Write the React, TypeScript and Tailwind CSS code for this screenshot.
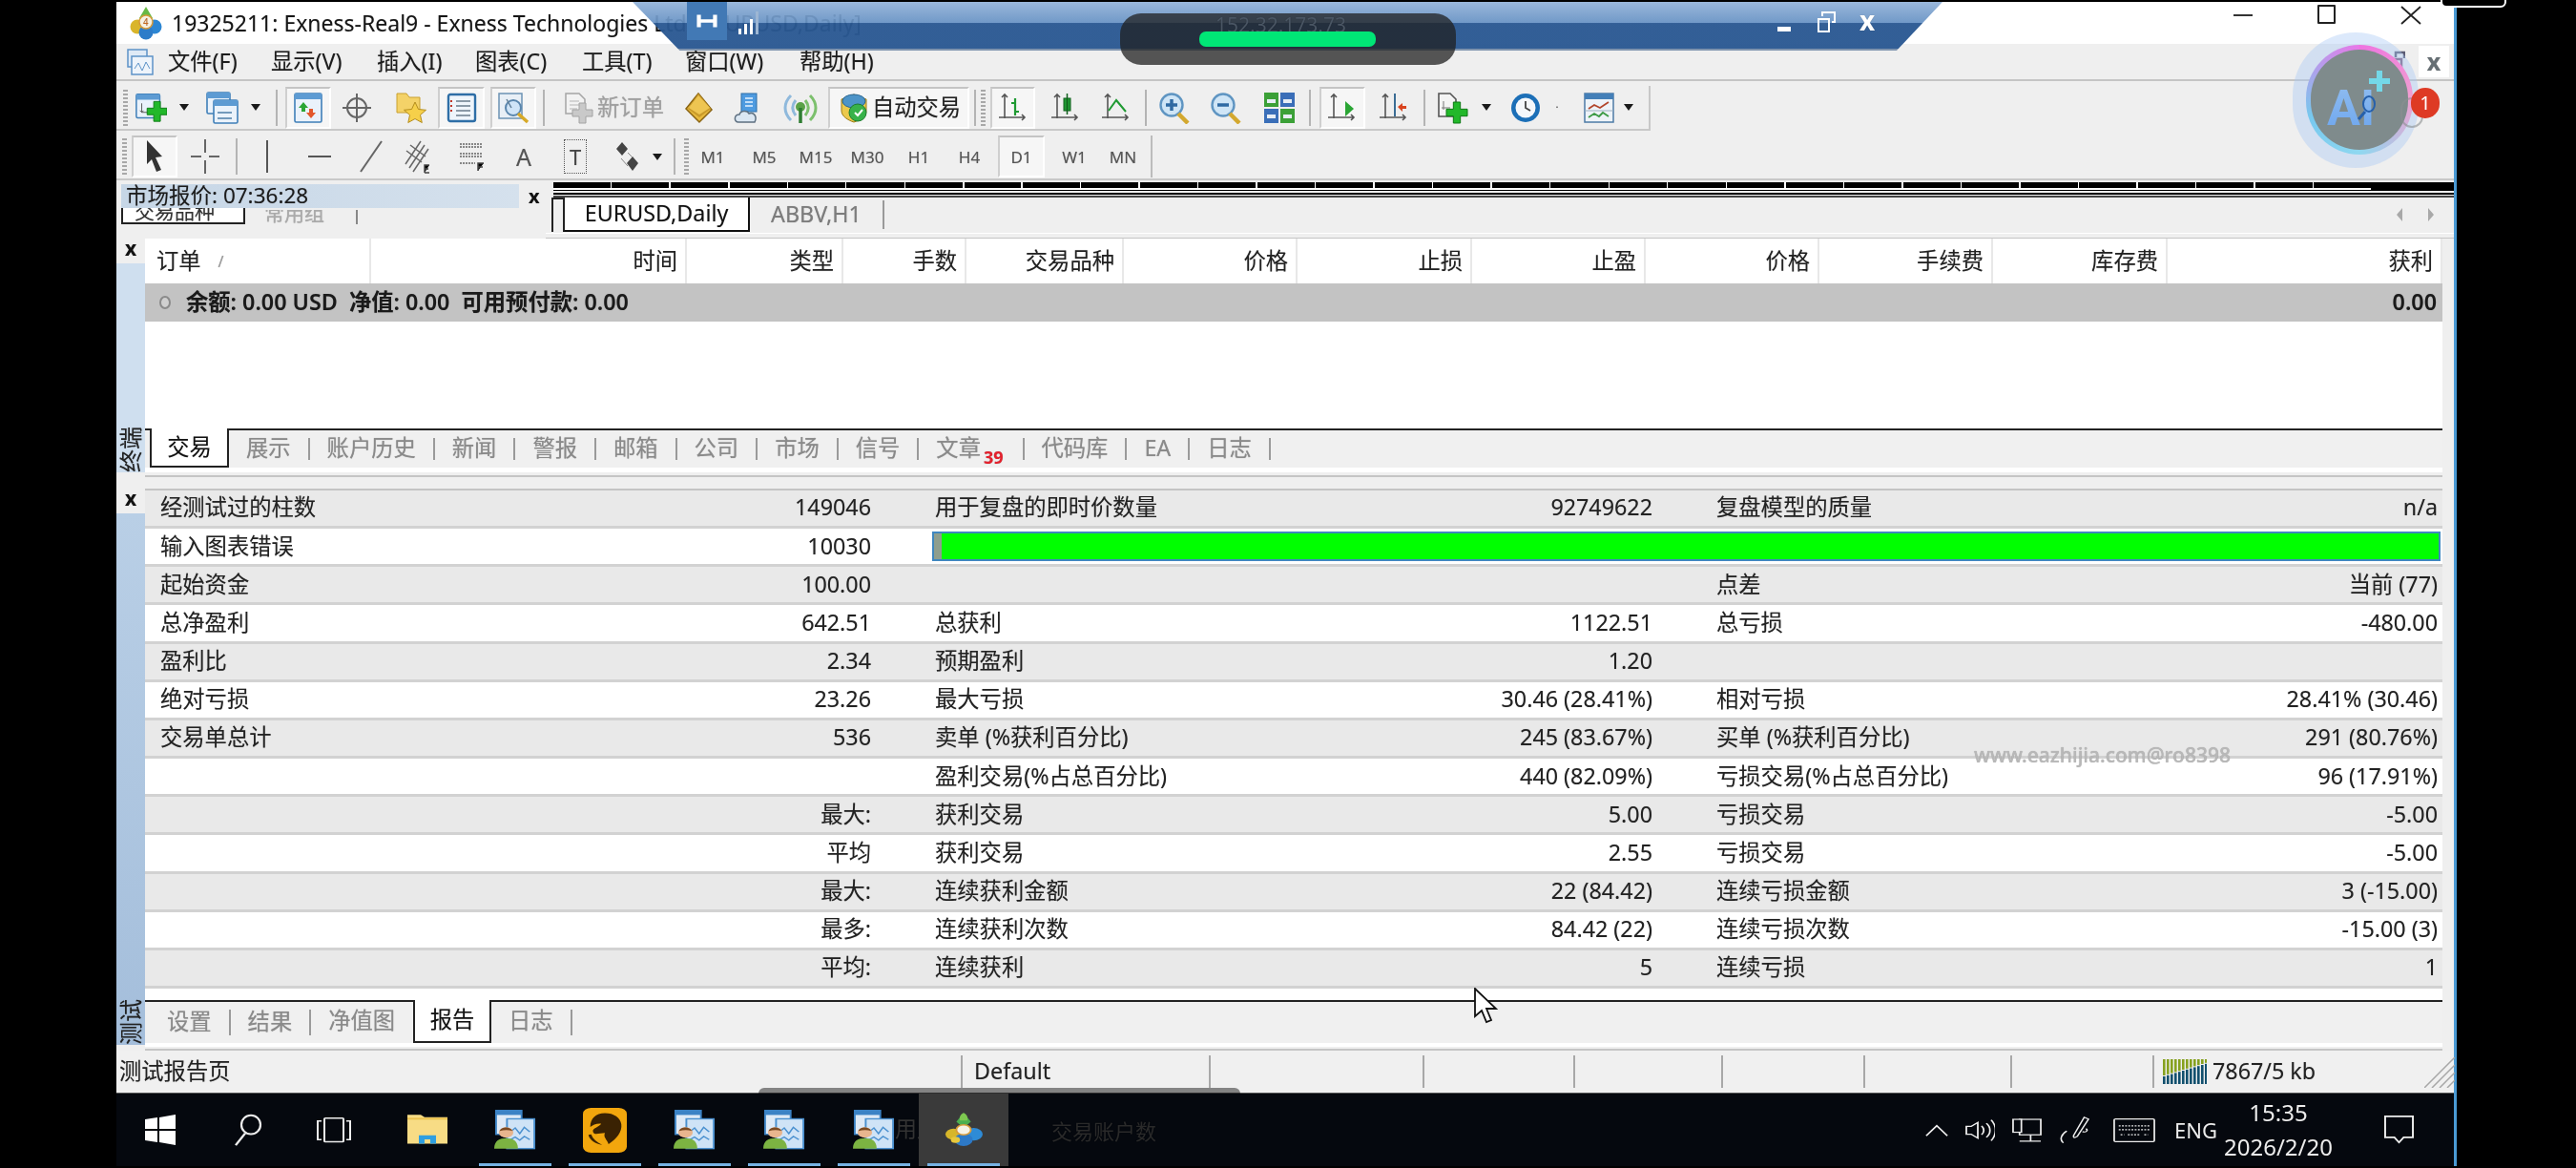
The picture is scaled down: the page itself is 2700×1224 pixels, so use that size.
import React from "react";

type P = { children?: React.ReactNode; c?: string };
const Slot = ({ children, c = "" }: P) => <div className={`flex h-full shrink-0 items-center justify-center ${c}`}>{children}</div>;
const Act = ({ children, c = "" }: P) => (
  <div className={`flex h-[44px] shrink-0 items-center justify-center border-b-2 border-l-2 border-r-2 border-t-2 border-b-white border-l-[#cfcfcf] border-r-white border-t-[#c4c4c4] bg-[#f6f6f6] ${c}`}>{children}</div>
);
const Sep = () => <div className="h-[38px] w-[2px] bg-[#b4b4b4]" />;
const Grip = () => <div className="h-[38px] w-[5px] bg-[repeating-linear-gradient(to_bottom,#a8a8a8_0,#a8a8a8_2px,transparent_2px,transparent_4px)]" />;
const Caret = () => <svg width="10" height="7" viewBox="0 0 10 7"><path d="M0 0h10L5 7z" fill="#1a1a1a" /></svg>;

const Ic = ({ children, w = 36, h = 34 }: { children: React.ReactNode; w?: number; h?: number }) => (
  <svg width={w} height={h} viewBox={`0 0 ${w} ${h}`} fill="none">{children}</svg>
);
const Plus = ({ x, y, s = 20, f = "#22b82a", st = "#0d7a14" }: { x: number; y: number; s?: number; f?: string; st?: string }) => {
  const t = s / 3;
  return <path d={`M${x + t} ${y}h${t}v${t}h${t}v${t}h${-t}v${t}h${-t}v${-t}h${-t}v${-t}h${t}z`} fill={f} stroke={st} strokeWidth="1" />;
};
const Win = ({ x = 2, y = 2, w = 26, h = 26 }: { x?: number; y?: number; w?: number; h?: number }) => (
  <g><rect x={x} y={y} width={w} height={h} rx="1.5" fill="#eaf2fb" stroke="#3f7fb8" strokeWidth="1.6" /><rect x={x} y={y} width={w} height="6" fill="#5d9bd3" /></g>
);
const Axis = () => <path d="M9 3v25M4 27h26M6 6l3-3 3 3M27 24l3 3-3 3M4 27h-1" stroke="#555" strokeWidth="1.6" />;

const INew = () => <Ic><Win /><path d="M8 12v10M6 20l2 2 2-2M8 22h10" stroke="#555" /><Plus x={14} y={10} s={22} /></Ic>;
const IProfile = () => <Ic><Win x={2} y={1} w={24} h={22} /><Win x={9} y={9} w={25} h={24} /><path d="M13 22h15M13 28h15" stroke="#4c7ea8" strokeWidth="1.4" /></Ic>;
const IMW = () => <Ic><Win x={4} y={2} w={28} h={30} /><path d="M13 11l5 6h-3v4h-4v-4H8z" fill="#2aa534" /><path d="M21 28l-5-6h3v-4h4v4h3z" fill="#e2572c" /></Ic>;
const ICross = () => <Ic><circle cx="18" cy="17" r="10" stroke="#666" strokeWidth="2" /><path d="M18 2v30M3 17h30" stroke="#666" strokeWidth="2" /></Ic>;
const IFolder = () => <Ic><path d="M4 2h10l3 4h11v16H4z" fill="#f4d268" stroke="#c9a02f" /><path d="M23 11l3.5 7.5 8 .8-6 5.2 1.8 8-7.300-4-7.200 4 1.700-8-6-5.200 8-.8z" fill="#f6d04a" stroke="#b58d1d" /></Ic>;
const INav = () => <Ic><rect x="4" y="3" width="28" height="28" rx="2" fill="#eff5fb" stroke="#2e6ea6" strokeWidth="2.4" /><path d="M12 10h15M12 15h15M12 20h15M12 25h15" stroke="#6b7c8c" strokeWidth="1.500" /><path d="M7 9v2M7 14v2M7 19v2" stroke="#c0392b" strokeWidth="2" /></Ic>;
const ITester = () => <Ic><rect x="3" y="2" width="24" height="26" fill="#e8eff6" stroke="#6c93b4" strokeWidth="1.500" /><circle cx="18" cy="17" r="8" fill="#cfe4f7" stroke="#5a86ad" strokeWidth="2" /><path d="M23 23l10 9" stroke="#d7a928" strokeWidth="3.500" /><path d="M11 8l5 9" stroke="#627f98" strokeWidth="1.500" /></Ic>;
const IDoc = () => <Ic><path d="M5 2h14l6 6v15H5z" fill="#f2f2f2" stroke="#a5a5a5" strokeWidth="1.500" /><path d="M9 10h10M9 14h10M9 18h8" stroke="#b5b5b5" /><Plus x={12} y={12} s={21} f="#c9c9c9" st="#a3a3a3" /></Ic>;
const IDiamond = () => <Ic><path d="M17 2l14 17-13 13L4 18z" fill="#e7b93d" stroke="#8a6413" strokeWidth="1.500" /><path d="M17 2L6 18l12 9 12-9" fill="#c99a2a" /><path d="M17 4L7 17l11 7 11-7z" fill="#eec552" /></Ic>;
const ICloud = () => <Ic><rect x="10" y="2" width="16" height="19" fill="#4f9be0" stroke="#2c6ea8" /><path d="M14 7h8M14 11h8M14 15h8" stroke="#e8f4ff" strokeWidth="1.500" /><path d="M7 32c-5 0-5-8 1-8 1-4 8-5 10-1 5-2 9 3 6 9z" fill="#dbe7f2" stroke="#5d6f80" strokeWidth="1.500" /></Ic>;
const ISignal = () => <Ic><path d="M8 4c-8 8-8 18 0 26" stroke="#8fb9dc" strokeWidth="3" /><path d="M13 9c-4 5-4 11 0 16" stroke="#8fb9dc" strokeWidth="3" /><path d="M28 4c8 8 8 18 0 26" stroke="#7cc06d" strokeWidth="3" /><path d="M23 9c4 5 4 11 0 16" stroke="#7cc06d" strokeWidth="3" /><circle cx="18" cy="16" r="5" fill="#5aa248" /><path d="M18 17v16" stroke="#2e7d32" strokeWidth="3.500" /></Ic>;
const IAuto = () => <Ic><path d="M5 8l13-5 13 5v12c0 6-7 10-13 12-6-2-13-6-13-12z" fill="#ecc94c" stroke="#9b7b16" /><ellipse cx="18" cy="10" rx="12" ry="7" fill="#4d94c8" stroke="#2a6591" /><circle cx="22" cy="22" r="9" fill="#38b24a" stroke="#1d7d2e" /><path d="M19 22l3 3 5-6" stroke="#fff" strokeWidth="2" /></Ic>;
const IBars = () => <Ic><Axis /><path d="M20 7v18M16 12h4M20 21h4" stroke="#1f9a32" strokeWidth="2.200" /></Ic>;
const ICandle = () => <Ic><Axis /><rect x="16" y="7" width="7" height="13" fill="#1f9a32" stroke="#105f1c" /><path d="M19.500 2v22" stroke="#105f1c" strokeWidth="1.500" /></Ic>;
const ILine = () => <Ic><Axis /><path d="M10 20l8-11 10 12" stroke="#1f9a32" strokeWidth="2" /></Ic>;
const IZoom = ({ minus }: { minus?: boolean }) => (
  <Ic><circle cx="14" cy="14" r="11.500" fill="#cfe5f6" stroke="#5f95c2" strokeWidth="2.400" /><path d="M21 23l10 10" stroke="#d3a82f" strokeWidth="4.500" /><path d="M8 14h12" stroke="#2f6aa3" strokeWidth="3.500" />{!minus && <path d="M14 8v12" stroke="#2f6aa3" strokeWidth="3.500" />}</Ic>
);
const ITile = () => <Ic><rect x="2" y="1" width="15" height="15" fill="#3ba037" /><rect x="19" y="1" width="15" height="15" fill="#3a6eb8" /><rect x="2" y="18" width="15" height="15" fill="#3a6eb8" /><rect x="19" y="18" width="15" height="15" fill="#3ba037" /><path d="M5 8h9v4H5zM22 8h9v4h-9zM5 24h9v4H5zM22 24h9v4h-9z" fill="#e6edf5" /></Ic>;
const IShift = () => <Ic><Axis /><path d="M21 10l9 8-9 8z" fill="#2aa534" /></Ic>;
const IScroll = () => <Ic><Axis /><path d="M19 2v24" stroke="#3b6c94" strokeWidth="2" /><path d="M22 16l5-4v3h4v3h-4v3z" fill="#d9441f" /></Ic>;
const IDocG = () => <Ic><path d="M4 2h12l6 6v18H4z" fill="#f4f4f4" stroke="#555" strokeWidth="1.600" /><path d="M9 10v9M7 17h9" stroke="#777" /><Plus x={12} y={11} s={22} /></Ic>;
const IClock = () => <Ic><circle cx="18" cy="17" r="15" fill="#1c6fb7" /><circle cx="18" cy="17" r="10.500" fill="#f5f8fb" /><path d="M18 10v7l5 3" stroke="#444" strokeWidth="1.800" /></Ic>;
const IInd = () => <Ic><rect x="3" y="2" width="30" height="30" fill="#eef3f8" stroke="#4d7ba6" strokeWidth="1.500" /><rect x="3" y="2" width="30" height="6" fill="#447fb8" /><path d="M7 18l6-4 6 3 9-6" stroke="#b2462c" strokeWidth="1.800" /><path d="M7 27l6-4 5 3 4-4 6 4" stroke="#3d9a46" strokeWidth="1.800" /><path d="M3 20h30" stroke="#9db1c3" /></Ic>;

const TB1 = () => (
  <div className="flex h-[52px] items-stretch bg-[#efefef] pt-[5px]">
    <div className="flex h-[47px] w-[1608px] items-center border-b-2 border-r-2 border-b-[#c8c8c8] border-r-[#c8c8c8]">
      <Slot c="w-[19px]"><Grip /></Slot>
      <Slot c="w-[34px]"><INew /></Slot>
      <Slot c="w-[36px]"><Caret /></Slot>
      <Slot c="w-[44px]"><IProfile /></Slot>
      <Slot c="w-[26px]"><Caret /></Slot>
      <Slot c="w-[18px]"><Sep /></Slot>
      <Act c="w-[48px]"><IMW /></Act>
      <Slot c="w-[54px]"><ICross /></Slot>
      <Slot c="w-[58px]"><IFolder /></Slot>
      <Act c="w-[49px]"><INav /></Act>
      <Act c="ml-[6px] w-[48px]"><ITester /></Act>
      <Slot c="w-[15px]"><Sep /></Slot>
      <Slot c="w-[128px] gap-[2px] pl-[2px] text-[#a0a0a0]"><IDoc /><span className="whitespace-nowrap">新订单</span></Slot>
      <Slot c="w-[55px]"><IDiamond /></Slot>
      <Slot c="w-[50px]"><ICloud /></Slot>
      <Slot c="w-[58px]"><ISignal /></Slot>
      <Act c="w-[148px] gap-[1px]"><IAuto /><span className="whitespace-nowrap text-[#222]">自动交易</span></Act>
      <Slot c="w-[22px]"><Sep /><div className="ml-[5px]"><Grip /></div></Slot>
      <Act c="w-[47px]"><IBars /></Act>
      <Slot c="w-[64px]"><ICandle /></Slot>
      <Slot c="w-[42px]"><ILine /></Slot>
      <Slot c="w-[20px]"><Sep /></Slot>
      <Slot c="w-[42px]"><IZoom /></Slot>
      <Slot c="w-[66px]"><IZoom minus /></Slot>
      <Slot c="w-[44px]"><ITile /></Slot>
      <Slot c="w-[20px]"><Sep /></Slot>
      <Act c="w-[48px]"><IShift /></Act>
      <Slot c="w-[60px]"><IScroll /></Slot>
      <Slot c="w-[4px]"><Sep /></Slot>
      <Slot c="w-[54px]"><IDocG /></Slot>
      <Slot c="w-[18px]"><Caret /></Slot>
      <Slot c="w-[64px]"><IClock /></Slot>
      <Slot c="w-[2px]"><Caret /></Slot>
      <Slot c="ml-[25px] w-[36px]"><IInd /></Slot>
      <Slot c="w-[26px]"><Caret /></Slot>
    </div>
  </div>
);

const Tf = ({ c, t }: { c: string; t: string }) => <Slot c={c}><span className="text-[17px] text-[#555]">{t}</span></Slot>;
const TB2 = () => (
  <div className="flex h-[52px] items-center border-b-2 border-b-[#c9c9c9] bg-[#efefef] pt-[4px]">
    <Slot c="w-[16px]"><Grip /></Slot>
    <Act c="w-[48px]"><svg width="22" height="36" viewBox="0 0 22 36"><path d="M3 1l16 17-7 1 6 13-5 2-5-13-5 5z" fill="#333" /></svg></Act>
    <Slot c="w-[58px]"><svg width="30" height="36" viewBox="0 0 30 36"><path d="M15 0v14M15 22v14M0 18h11M19 18h11" stroke="#666" strokeWidth="2" /></svg></Slot>
    <Slot c="w-[8px]"><Sep /></Slot>
    <Slot c="w-[56px]"><div className="h-[34px] w-[2px] bg-[#555]" /></Slot>
    <Slot c="w-[54px]"><div className="h-[2px] w-[24px] bg-[#555]" /></Slot>
    <Slot c="w-[54px]"><svg width="26" height="34" viewBox="0 0 26 34"><path d="M2 33L24 1" stroke="#666" strokeWidth="2" /></svg></Slot>
    <Slot c="w-[46px]"><svg width="30" height="36" viewBox="0 0 30 36"><path d="M1 26L17 2M5 30L21 6M9 34L25 10M2 12l16 12M6 6l16 12" stroke="#666" strokeWidth="1.500" /><path d="M21 35v-8h5M21 31h4M21 35h5" stroke="#444" strokeWidth="1.400" /></svg></Slot>
    <Slot c="w-[66px]"><svg width="30" height="32" viewBox="0 0 30 32"><path d="M2 3h24M2 6h24M2 13h24M2 16h24M2 23h16" stroke="#666" strokeWidth="1.500" strokeDasharray="2 1" /><path d="M21 31v-8h6M21 27h5" stroke="#444" strokeWidth="1.500" /></svg></Slot>
    <Slot c="w-[42px]"><span className="text-[25px] text-[#555]">A</span></Slot>
    <Slot c="w-[66px]"><div className="flex h-[36px] w-[24px] items-center justify-center border border-dotted border-[#555] text-[22px] leading-none text-[#444]">T</div></Slot>
    <Slot c="w-[42px]"><svg width="26" height="32" viewBox="0 0 26 32"><path d="M8 1l6 7-6 7-6-7z" fill="#444" /><path d="M19 16l6 7-6 8-6-8z" fill="#444" /><path d="M14 12l5 5M7 18l7 8" stroke="#888" /></svg></Slot>
    <Slot c="w-[22px]"><Caret /></Slot>
    <Slot c="w-[14px]"><Sep /></Slot>
    <Slot c="w-[10px]"><Grip /></Slot>
    <Tf c="w-[46px]" t="M1" />
    <Tf c="w-[62px]" t="M5" />
    <Tf c="w-[46px]" t="M15" />
    <Tf c="w-[62px]" t="M30" />
    <Tf c="w-[46px]" t="H1" />
    <Tf c="w-[60px]" t="H4" />
    <Act c="w-[49px]"><span className="text-[17px] text-[#555]">D1</span></Act>
    <Tf c="w-[62px]" t="W1" />
    <Tf c="w-[40px]" t="MN" />
    <Slot c="w-[11px] justify-end"><div className="h-[44px] w-[2px] bg-[#bcbcbc]" /></Slot>
  </div>
);

const Middle = () => (
  <div className="flex h-[61px] bg-[#efefef]">
    <div className="flex w-[450px] shrink-0 flex-col pl-[5px]">
      <div className="mt-[4px] flex h-[25px] items-center">
        <div className="flex h-full w-[417px] items-center bg-[linear-gradient(to_right,#c6d6e6,#d5e1ed)] pl-[5px] text-[22.500px] leading-none text-[#1c1c1c]">市场报价: 07:36:28</div>
        <span className="ml-[10px] text-[20px] font-bold leading-none text-[#111]">x</span>
      </div>
      <div className="flex h-[17px] items-end">
        <div className="h-[17px] w-[130px] overflow-hidden border-b-2 border-l-2 border-r-2 border-[#222] bg-white pl-[12px] text-[21px] leading-[6px] text-[#333]">交易品种</div>
        <div className="ml-[20px] h-[15px] w-[90px] overflow-hidden text-[21px] leading-[6px] text-[#aaa]">常用组</div>
        <div className="ml-[6px] h-[15px] w-[2px] bg-[#888]" />
      </div>
    </div>
    <div className="flex min-w-0 flex-1 flex-col">
      <div className="mt-[2px] flex h-[16px] flex-col pl-[8px]">
        <div className="flex h-[9px] items-stretch bg-black pr-[87px]">
          <div className="h-[8px] flex-1 border-b-2 border-b-white bg-[repeating-linear-gradient(to_right,#000_0,#000_60px,#fff_60px,#fff_61.500px)] pt-[5px]" />
        </div>
        <div className="mt-[2px] h-[2px] bg-black" />
        <div className="mt-[1px] h-[2px] bg-[#444]" />
      </div>
      <div className="flex h-[36px] items-stretch pl-[6px] pr-[16px]">
        <div className="w-[12px] border-l-2 border-t-2 border-[#222]" />
        <div className="flex h-[36px] w-[196px] items-center justify-center border-b-2 border-l-2 border-r-2 border-b-[#111] border-l-[#222] border-r-[#111] bg-white text-[#111]">EURUSD,Daily</div>
        <div className="my-[3px] flex w-[141px] items-center justify-center border-r-2 border-[#9a9a9a] text-[#7c7c7c]">ABBV,H1</div>
        <div className="flex flex-1 items-center justify-end gap-[25px] pr-[4px]">
          <svg width="8" height="14" viewBox="0 0 8 14"><path d="M7 0v14L1 7z" fill="#a8a8a8" /></svg>
          <svg width="8" height="14" viewBox="0 0 8 14"><path d="M1 0v14l6-7z" fill="#a8a8a8" /></svg>
        </div>
      </div>
      <div className="mt-[1px] h-[3px] bg-white" />
      <div className="mt-[4px] h-[2px] bg-[#c5c5c5]" />
    </div>
  </div>
);

const heads: [string, string][] = [["订单", "pl-[12px] justify-start"], ["时间", ""], ["类型", ""], ["手数", ""], ["交易品种", ""], ["价格", ""], ["止损", ""], ["止盈", ""], ["价格", ""], ["手续费", ""], ["库存费", ""], ["获利", ""]];

const SideLabel = ({ t, bg }: { t: string; bg: string }) => (
  <div className="flex w-[30px] shrink-0 flex-col">
    <div className="flex h-[26px] items-start justify-center"><span className="text-[21px] font-bold leading-[20px] text-[#111]">x</span></div>
    <div className={`flex flex-1 items-end justify-center ${bg}`}>
      <span className="rotate-180 text-[24px] leading-[26px] text-[#222] [text-orientation:sideways] [writing-mode:vertical-lr]">{t}</span>
    </div>
  </div>
);

const Tab = ({ t, sup, c = "" }: { t: string; sup?: string; c?: string }) => (
  <div className={`my-[8px] flex items-center whitespace-nowrap border-r-2 border-[#9a9a9a] px-[18px] pb-[1px] text-[#8a8a8a] ${c}`}>
    {t}{sup && <span className="ml-[3px] mr-[2px] mt-[18px] text-[18px] font-bold leading-none text-[#e4202c]">{sup}</span>}
  </div>
);

const Terminal = () => (
  <div className="flex h-[262px] bg-[#efefef]">
    <div className="flex h-[245px] shrink-0">
      <SideLabel t="终端" bg="bg-[#cfdfef]" />
    </div>
    <div className="mr-[12px] flex min-w-0 flex-1 flex-col">
      <div className="grid h-[47px] grid-cols-[237px_331px_164px_129px_165px_182px_183px_182px_182px_182px_183px_1fr] bg-white">
        {heads.map(([t, c], i) => (
          <div key={i} className={`flex items-center justify-end border-r-2 border-[#e8e8e8] pr-[8px] text-[#222] ${c}`}>
            {t}{i === 0 && <span className="ml-[18px] text-[16px] text-[#999]">/</span>}
          </div>
        ))}
      </div>
      <div className="flex h-[40px] items-center justify-between bg-[#c3c3c3] pl-[14px] pr-[6px] font-semibold text-[#1a1a1a]">
        <div className="flex items-center">
          <svg width="14" height="16" viewBox="0 0 14 16"><ellipse cx="7" cy="8" rx="5" ry="6" fill="#d0d0d0" stroke="#8b8b8b" strokeWidth="2" /></svg>
          <span className="ml-[15px] whitespace-pre">余额: 0.00 USD  净值: 0.00  可用预付款: 0.00</span>
        </div>
        <span>0.00</span>
      </div>
      <div className="h-[112px] bg-white" />
      <div className="h-[2px] bg-[#222]" />
      <div className="flex h-[39px] bg-[#f0f0f0]">
        <div className="ml-[5px] -mt-[2px] flex h-[41px] w-[83px] items-center justify-center border-b-2 border-l-2 border-r-2 border-b-[#222] border-l-[#222] border-r-[#222] bg-white text-[#111]">交易</div>
        <Tab t="展示" />
        <Tab t="账户历史" />
        <Tab t="新闻" />
        <Tab t="警报" />
        <Tab t="邮箱" />
        <Tab t="公司" />
        <Tab t="市场" />
        <Tab t="信号" />
        <Tab t="文章" sup="39" />
        <Tab t="代码库" />
        <Tab t="EA" />
        <Tab t="日志" />
      </div>
      <div className="h-[5px] bg-white" />
      <div className="mt-[3px] h-[2px] bg-[#c5c5c5]" />
    </div>
  </div>
);

type Row = [string, string, string, string, string, string];
const rows: Row[] = [
  ["经测试过的柱数", "149046", "用于复盘的即时价数量", "92749622", "复盘模型的质量", "n/a"],
  ["输入图表错误", "10030", "", "", "", ""],
  ["起始资金", "100.00", "", "", "点差", "当前 (77)"],
  ["总净盈利", "642.51", "总获利", "1122.51", "总亏损", "-480.00"],
  ["盈利比", "2.34", "预期盈利", "1.20", "", ""],
  ["绝对亏损", "23.26", "最大亏损", "30.46 (28.41%)", "相对亏损", "28.41% (30.46)"],
  ["交易单总计", "536", "卖单 (%获利百分比)", "245 (83.67%)", "买单 (%获利百分比)", "291 (80.76%)"],
  ["", "", "盈利交易(%占总百分比)", "440 (82.09%)", "亏损交易(%占总百分比)", "96 (17.91%)"],
  ["", "最大:", "获利交易", "5.00", "亏损交易", "-5.00"],
  ["", "平均", "获利交易", "2.55", "亏损交易", "-5.00"],
  ["", "最大:", "连续获利金额", "22 (84.42)", "连续亏损金额", "3 (-15.00)"],
  ["", "最多:", "连续获利次数", "84.42 (22)", "连续亏损次数", "-15.00 (3)"],
  ["", "平均:", "连续获利", "5", "连续亏损", "1"],
];

const Cell = ({ a, b }: { a: string; b: string }) => (
  <div className="flex items-center justify-between whitespace-nowrap pb-[1px]"><span>{a}</span><span>{b}</span></div>
);

const Tester = () => (
  <div className="flex h-[589px] bg-[#efefef]">
    <div className="flex h-[583px] shrink-0">
      <SideLabel t="测试" bg="bg-[linear-gradient(to_bottom,#b9cfe6,#a4bedb)]" />
    </div>
    <div className="mr-[12px] flex min-w-0 flex-1 flex-col">
      <div className="relative flex h-[524px] flex-col border-t-2 border-t-[#c4c4c4] text-[#222]">
        {rows.map((r, i) => (
          <div key={i} className={`grid flex-1 grid-cols-[745px_752px_756px] gap-x-[67px] border-b-[3px] border-b-[#d2d2d2] pl-[16px] pr-[8px] ${i % 2 === 0 ? "bg-[#e9e9e9]" : "bg-white"}`}>
            <Cell a={r[0]} b={r[1]} />
            {i === 1 ? (
              <div className="col-span-2 -mx-[3px] my-[3px] flex border-2 border-[#3f87c0] bg-[#00ff00]">
                <div className="w-[8px] bg-[#8e9e8e]" />
              </div>
            ) : (
              <>
                <Cell a={r[2]} b={r[3]} />
                <Cell a={r[4]} b={r[5]} />
              </>
            )}
          </div>
        ))}
        <span className="absolute left-[1917px] top-[267px] text-[21px] font-medium leading-none text-[#b8b8b8]">www.eazhijia.com@ro8398</span>
      </div>
      <div className="h-[12px] bg-white" />
      <div className="h-[2px] bg-[#222]" />
      <div className="flex h-[43px] bg-[#f0f0f0]">
        <Tab t="设置" c="pl-[23px]" />
        <Tab t="结果" />
        <div className="my-[8px] flex items-center whitespace-nowrap pb-[3px] pl-[18px] pr-[19px] text-[#8a8a8a]">净值图</div>
        <div className="-mt-[2px] flex h-[45px] w-[82px] items-center justify-center border-b-2 border-l-2 border-r-2 border-[#222] bg-white pb-[2px] text-[#111]">报告</div>
        <Tab t="日志" c="pb-[3px]" />
      </div>
      <div className="h-[4px] bg-white" />
      <div className="mt-[2px] h-[2px] bg-[#c5c5c5]" />
    </div>
  </div>
);

const Status = () => (
  <div className="flex h-[45px] items-stretch border-b border-[#555] bg-[#f0f0f0] text-[#222]">
    <div className="flex w-[885px] shrink-0 items-center pl-[3px]">测试报告页</div>
    <div className="my-[5px] flex w-[260px] shrink-0 items-center border-l-2 border-[#a8a8a8] pl-[12px]">Default</div>
    <div className="my-[5px] w-[224px] shrink-0 border-l-2 border-[#a8a8a8]" />
    <div className="my-[5px] w-[158px] shrink-0 border-l-2 border-[#a8a8a8]" />
    <div className="my-[5px] w-[155px] shrink-0 border-l-2 border-[#a8a8a8]" />
    <div className="my-[5px] w-[149px] shrink-0 border-l-2 border-[#a8a8a8]" />
    <div className="my-[5px] w-[154px] shrink-0 border-l-2 border-[#a8a8a8]" />
    <div className="my-[5px] w-[149px] shrink-0 border-l-2 border-[#a8a8a8]" />
    <div className="my-[5px] flex min-w-0 flex-1 items-center border-l-2 border-[#a8a8a8] pl-[9px]">
      <svg width="46" height="26" viewBox="0 0 46 26">
        {[0, 1, 2, 3, 4, 5, 6, 7, 8, 9, 10, 11].map((i) => (
          <g key={i}>
            <rect x={i * 4} y="0" width="2.600" height={Math.max(3, 17 - i * 1.2)} fill="#86a11f" />
            <rect x={i * 4} y={Math.max(3, 17 - i * 1.2) + 1} width="2.600" height={25 - Math.max(3, 17 - i * 1.2)} fill="#12506e" />
          </g>
        ))}
      </svg>
      <span className="ml-[6px] whitespace-nowrap">7867/5 kb</span>
      <svg className="ml-auto mr-[-1px] self-end" width="32" height="32" viewBox="0 0 32 32"><path d="M0 32L32 0M8 32L32 8M16 32L32 16M24 32l8-8" stroke="#a7a7a7" strokeWidth="1.500" /></svg>
    </div>
  </div>
);

const TaskPerson = () => (
  <svg width="44" height="42" viewBox="0 0 46 62" fill="none" preserveAspectRatio="none">
    <rect x="2" y="0" width="28" height="38" fill="#dfeaf6" stroke="#3c83c5" strokeWidth="2" /><rect x="2" y="0" width="28" height="8" fill="#3c83c5" />
    <rect x="14" y="14" width="30" height="46" fill="#cfe3f6" stroke="#4a90cf" strokeWidth="2" />
    <path d="M18 34l5-6 5 9 5-10 6 7M18 46l5-4 5 5 5-6 6 5" stroke="#4a90cf" strokeWidth="1.800" />
    <circle cx="13" cy="35" r="8" fill="#e8b58e" /><path d="M6 33c1-7 12-8 14 0-4-2-9-2-14 0z" fill="#7b4a22" />
    <path d="M0 60c0-12 6-16 13-16s13 4 13 16z" fill="#7cb342" />
  </svg>
);
const TaskMT4 = () => (
  <svg width="40" height="38" viewBox="0 0 42 58" fill="none" preserveAspectRatio="none">
    <path d="M21 2l8 14-8 10-8-10z" fill="#4caf50" /><path d="M21 2c4 3 5 7 4 12H17c-1-5 0-9 4-12z" fill="#7ec850" />
    <circle cx="10" cy="36" r="9" fill="#d6b62a" /><circle cx="32" cy="36" r="10" fill="#2e8bd6" /><circle cx="21" cy="45" r="10" fill="#2d79c7" /><circle cx="12" cy="45" r="5" fill="#e8c83b" />
    <circle cx="21" cy="29" r="8" fill="#f6f2e6" stroke="#d89a38" strokeWidth="2" />
  </svg>
);
const Lion = () => (
  <svg width="46" height="47" viewBox="0 0 48 68" preserveAspectRatio="none"><rect width="48" height="68" rx="9" fill="#f2a60d" /><path d="M24 8c10 0 17 7 18 17 1 11-5 22-14 30-2-8-6-10-4-17-6 0-12 4-13-2-1-5 7-7 9-12-5-1-9 2-12 5 0-13 6-21 16-21z" fill="#3a2203" /><path d="M9 40c2 7 6 12 12 16-7-1-14-7-15-15z" fill="#3a2203" /></svg>
);
const Slotk = ({ children, c = "" }: P) => <div className={`relative flex h-full w-[94px] shrink-0 items-center justify-center ${c}`}>{children}</div>;
const Under = () => <div className="absolute bottom-0 left-[9px] h-[3px] w-[76px] bg-[#76b2e3]" />;

const Taskbar = () => (
  <div className="relative flex h-[76px] items-stretch bg-[#05080e] pr-[42px]">
    <div className="absolute -top-[6px] left-[673px] h-[6px] w-[505px] rounded-t-[40px] bg-black/45" />
    <span className="absolute left-[816px] top-[25px] text-[23px] leading-none text-[#333]">用户</span>
    <span className="absolute left-[980px] top-[28px] text-[22px] leading-none text-[#2a2a2a]">交易账户数</span>
    <div className="flex w-[90px] shrink-0 items-center justify-center pl-[2px]">
      <svg width="32" height="32" viewBox="0 0 32 32"><path d="M0 5l13-2v12H0zM15 3l17-3v15H15zM0 17h13v12L0 27zM15 17h17v15l-17-3z" fill="#fff" /></svg>
    </div>
    <div className="flex w-[95px] shrink-0 items-center justify-center">
      <svg width="30" height="34" viewBox="0 0 30 38" fill="none" preserveAspectRatio="none"><ellipse cx="18" cy="13" rx="10" ry="11" stroke="#eee" strokeWidth="2.200" /><path d="M12 23L2 37" stroke="#eee" strokeWidth="2.400" /></svg>
    </div>
    <div className="flex w-[86px] shrink-0 items-center justify-center">
      <svg width="38" height="27" viewBox="0 0 38 36" fill="none" preserveAspectRatio="none"><rect x="9" y="1" width="20" height="33" rx="1" stroke="#eee" strokeWidth="2" /><path d="M6 5H2v26h4M32 5h4v26h-4" stroke="#eee" strokeWidth="2" /></svg>
    </div>
    <div className="flex w-[100px] shrink-0 items-center justify-center pl-[10px]">
      <svg width="42" height="34" viewBox="0 0 42 54" preserveAspectRatio="none"><path d="M0 2h14l4 4h24v44H0z" fill="#f7dc85" /><rect y="7" width="42" height="3" fill="#ecc24c" /><path d="M12 50V36h18v14h-6v-7h-6v7z" fill="#2f9fe0" /></svg>
    </div>
    <Slotk><TaskPerson /><Under /></Slotk>
    <Slotk><Lion /><Under /></Slotk>
    <Slotk><TaskPerson /><Under /></Slotk>
    <Slotk><TaskPerson /><Under /></Slotk>
    <Slotk><TaskPerson /><Under /></Slotk>
    <Slotk c="bg-[#3a3a3a]"><TaskMT4 /><Under /></Slotk>
    <div className="flex flex-1 items-center justify-end text-[#ececec]">
      <svg className="mr-[17px]" width="24" height="13" viewBox="0 0 26 16" fill="none" preserveAspectRatio="none"><path d="M1 15L13 2l12 13" stroke="#eee" strokeWidth="2" /></svg>
      <svg className="mr-[18px]" width="32" height="27" viewBox="0 0 32 40" fill="none" preserveAspectRatio="none"><path d="M2 14h5l7-6v24l-7-6H2z" stroke="#eee" strokeWidth="1.800" /><path d="M18 13c3 4 3 10 0 14M23 9c5 6 5 16 0 22M28 4c6 9 6 23 0 32" stroke="#eee" strokeWidth="1.800" /></svg>
      <svg className="mr-[19px]" width="31" height="27" viewBox="0 0 32 40" fill="none" preserveAspectRatio="none"><rect x="8" y="3" width="23" height="24" stroke="#eee" strokeWidth="1.800" /><rect x="1" y="3" width="9" height="20" fill="#05080e" stroke="#eee" strokeWidth="1.800" /><path d="M20 27v10M8 37h23" stroke="#eee" strokeWidth="1.800" /></svg>
      <svg className="mr-[25px]" width="31" height="30" viewBox="0 0 34 48" fill="none" preserveAspectRatio="none"><path d="M16 33L28 3l5 3-13 29c-3 3-5 3-4-2zM30 22c3 3 0 7-4 5M8 26c-6 5-9 14-4 20" stroke="#eee" strokeWidth="1.800" /></svg>
      <svg className="mr-[20px]" width="44" height="25" viewBox="0 0 46 38" fill="none" preserveAspectRatio="none"><rect x="1" y="1" width="44" height="36" rx="1.500" stroke="#eee" strokeWidth="1.800" /><path d="M6 12h34M6 18h34M8 26h4M16 26h14M34 26h4" stroke="#eee" strokeWidth="2" strokeDasharray="2 1.500" /></svg>
      <span className="mr-[3px] text-[22px]">ENG</span>
      <div className="mr-[50px] flex w-[122px] flex-col items-center text-[24px] leading-[36px]"><span>15:35</span><span>2026/2/20</span></div>
      <svg width="31" height="30" viewBox="0 0 32 34" fill="none" preserveAspectRatio="none"><path d="M1 1h30v25H21l-5 6-5-6H1z" stroke="#eee" strokeWidth="2" /></svg>
    </div>
  </div>
);

export default function App() {
  return (
    <div className="relative h-[1224px] w-[2700px] overflow-hidden bg-black pl-[122px] pr-[125px] pt-[2px] font-['Noto_Sans','Noto_Sans_CJK_SC',sans-serif] text-[23.300px] leading-none [filter:blur(0.4px)] [text-shadow:0_0_1px_rgba(0,0,0,.3)]">
      <div className="flex w-[2453px] flex-col border-r-[3px] border-r-[#4a9ad4]">
        <div className="flex h-[44px] items-center bg-white">
          <svg className="ml-[14px]" width="34" height="36" viewBox="0 0 34 36" fill="none">
            <path d="M17 1l7 12-7 8-7-8z" fill="#67b945" /><circle cx="8" cy="22" r="7.500" fill="#d9b52a" /><circle cx="26" cy="22" r="7.500" fill="#2c86d3" /><circle cx="17" cy="28" r="7.500" fill="#2d7cc9" />
            <circle cx="17" cy="17" r="7" fill="#f7f2e4" stroke="#d79a39" strokeWidth="1.500" /><text x="14" y="21" fontSize="10" fill="#c8681e" fontFamily="Liberation Sans">4</text>
          </svg>
          <span className="ml-[10px] whitespace-nowrap text-[23px] text-[#161616]">19325211: Exness-Real9 - Exness Technologies Ltd - [EURUSD,Daily]</span>
        </div>
        <div className="flex h-[39px] items-center border-b-2 border-b-[#c5c5c5] bg-[#efefef] text-[#1c1c1c]">
          <svg className="ml-[10px]" width="30" height="30" viewBox="0 0 30 30" fill="none"><rect x="2" y="2" width="20" height="18" fill="#dfeaf6" stroke="#5d93c8" strokeWidth="1.500" /><rect x="6" y="9" width="22" height="19" fill="#eef4fb" stroke="#5d93c8" strokeWidth="1.500" /><path d="M9 22l4-6 4 8 4-9 4 7" stroke="#5d93c8" /></svg>
          <span className="ml-[14px] w-[108px]">文件(F)</span>
          <span className="w-[111px]">显示(V)</span>
          <span className="w-[103px]">插入(I)</span>
          <span className="w-[112px]">图表(C)</span>
          <span className="w-[108px]">工具(T)</span>
          <span className="w-[120px]">窗口(W)</span>
          <span className="w-[100px]">帮助(H)</span>
          <div className="ml-auto mr-[5px] flex h-[33px] items-center">
            <span className="mr-[22px] mt-[6px] h-[4px] w-[12px] bg-[#5c666c]" />
            <svg className="mr-[14px]" width="16" height="24" viewBox="0 0 16 24" fill="none"><rect x="2" y="9" width="10" height="12" stroke="#7a5a78" strokeWidth="2.500" /><path d="M6 7V2h9v6" stroke="#5c5c74" strokeWidth="2.500" /></svg>
            <div className="flex h-[33px] w-[32px] items-center justify-center bg-white text-[25px] font-bold text-[#666f74]">x</div>
          </div>
        </div>
        <TB1 />
        <TB2 />
        <Middle />
        <Terminal />
        <Tester />
        <Status />
        <Taskbar />
      </div>

      {/* remote-desktop bar over the title */}
      <div className="absolute left-[663px] top-[2px] h-[51px] w-[1373px] border-b-2 border-b-[#7e93ad] bg-[linear-gradient(to_bottom,rgba(146,178,216,.93),rgba(103,146,196,.93)_44%,rgba(42,88,146,.96)_46%,rgba(42,88,146,.96))] [clip-path:polygon(0_0,100%_0,96.500%_100%,3.600%_100%)]">
        <div className="ml-[57px] flex h-[40px] w-[42px] items-center justify-center bg-[#4279b5]">
          <svg width="22" height="16" viewBox="0 0 26 22" fill="none" preserveAspectRatio="none"><path d="M3 2v18M23 2v18M3 11h20" stroke="#fff" strokeWidth="5" /></svg>
        </div>
      </div>
      <svg className="absolute left-[773px] top-[12px]" width="24" height="24" viewBox="0 0 24 24"><path d="M1 18h3v6H1zM7 13h3v11H7zM13 8h3v16h-3z" fill="#fff" /><path d="M19 0h3v24h-3z" fill="#9db6d3" /></svg>
      <div className="absolute left-[1863px] top-[28px] h-[5px] w-[14px] bg-white" />
      <svg className="absolute left-[1905px] top-[12px]" width="20" height="22" viewBox="0 0 20 22" fill="none"><rect x="1" y="8" width="11" height="13" stroke="#fff" strokeWidth="2" /><path d="M5 5V1h13v10h-3" stroke="#fff" strokeWidth="2" /></svg>
      <span className="absolute left-[1949px] top-[7px] text-[28px] font-bold leading-none text-white">x</span>

      {/* window buttons */}
      <div className="absolute left-[2341px] top-[15px] h-[2px] w-[20px] bg-[#333]" />
      <div className="absolute left-[2429px] top-[5px] h-[20px] w-[19px] rounded-[1px] border-2 border-[#222]" />
      <svg className="absolute left-[2516px] top-[6px]" width="22" height="20" viewBox="0 0 22 20" fill="none"><path d="M1 1l20 18M21 1L1 19" stroke="#222" strokeWidth="1.800" /></svg>
      <div className="absolute left-[2558px] top-[-6px] h-[14px] w-[69px] rounded-[6px] border-2 border-white bg-black" />

      {/* connection pill */}
      <div className="absolute left-[1174px] top-[14px] h-[54px] w-[352px] rounded-[22px] bg-[#202020]/75">
        <span className="absolute left-[100px] top-[2px] text-[21px] leading-[20px] text-[#4a5664]">152.32.173.73</span>
        <div className="absolute left-[83px] top-[19px] h-[16px] w-[185px] rounded-[7px] bg-[#00e676]" />
      </div>

      {/* AI bubble */}
      <div className="absolute left-[2403px] top-[34px] h-[142px] w-[132px] rounded-full bg-[#a8c8f4]/40">
        <div className="absolute left-[14px] top-[13px] h-[115px] w-[112px] rounded-full bg-[conic-gradient(#ee73e0,#f0a0d0_25%,#8fd8f0_50%,#77c8ee_70%,#e978e8)] p-[5px]">
          <div className="relative h-full w-full rounded-full bg-[#7f8b8c]">
            <span className="absolute left-[17px] top-[36px] bg-[linear-gradient(to_bottom,#8fbcf0,#6da6ee)] bg-clip-text font-['Roboto',sans-serif] text-[52px] font-bold leading-none text-transparent [text-shadow:none]">AI</span>
            <div className="absolute left-[69px] top-[22px] h-[22px] w-[6px] bg-[#74d8e8]" />
            <div className="absolute left-[61px] top-[30px] h-[6px] w-[22px] bg-[#74d8e8]" />
            <svg className="absolute left-[47px] top-[48px]" width="22" height="26" viewBox="0 0 22 26" fill="none"><ellipse cx="14" cy="9" rx="6" ry="8" stroke="#2660ab" strokeWidth="2" /><path d="M10 17L3 25" stroke="#2660ab" strokeWidth="3" /></svg>
          </div>
        </div>
      </div>
      <div className="absolute left-[2516px] top-[102px] h-[32px] w-[24px] rounded-full border-2 border-[#8a9091]/60" />
      <div className="absolute left-[2527px] top-[92px] flex h-[32px] w-[30px] items-center justify-center rounded-full bg-[#de3a24] text-[20px] leading-none text-white [text-shadow:none]">1</div>

      {/* pointer */}
      <svg className="absolute left-[1545px] top-[1035px]" width="26" height="40" viewBox="0 0 26 40"><path d="M1 1v29l7-6 5 12 5-2-5-12h10z" fill="#fff" stroke="#111" strokeWidth="1.800" /></svg>
    </div>
  );
}
